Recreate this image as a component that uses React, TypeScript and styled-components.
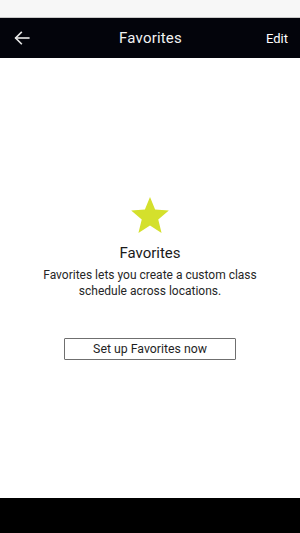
import { createGlobalStyle } from 'styled-components';
import styled from 'styled-components';

const GlobalStyle = createGlobalStyle`
  html, body {
    margin: 0;
    padding: 0;
    background: #ffffff;
  }
  body {
    font-family: Roboto, 'Liberation Sans', Arial, sans-serif;
  }
`;

const Screen = styled.div`
  display: flex;
  flex-direction: column;
  width: 300px;
  height: 533px;
  overflow: hidden;
`;

const StatusBar = styled.div`
  height: 17px;
  background: #f7f7f7;
  border-bottom: 1px solid #c9c9c9;
`;

const Header = styled.header`
  display: flex;
  align-items: center;
  justify-content: space-between;
  height: 40px;
  padding: 0 12px 0 13px;
  background: #03040b;
  color: #ffffff;
`;

const BackButton = styled.button`
  display: flex;
  align-items: center;
  width: 40px;
  padding: 0;
  background: none;
  border: none;
  color: #e6e6e6;
`;

const Title = styled.h1`
  margin: 0;
  font-size: 15px;
  font-weight: 400;
  letter-spacing: 0.2px;
  color: #f2f2f2;
`;

const EditButton = styled.button`
  width: 40px;
  padding: 0;
  background: none;
  border: none;
  color: #ffffff;
  font-family: inherit;
  font-size: 13px;
  font-weight: 400;
  text-align: right;
`;

const Body = styled.main`
  flex: 1;
  display: flex;
  flex-direction: column;
  align-items: center;
  padding-top: 138px;
`;

const StarIcon = styled.svg`
  width: 40px;
  height: 38px;
`;

const EmptyTitle = styled.h2`
  margin: 10px 0 0;
  font-size: 15px;
  font-weight: 400;
  color: #1a1a1a;
`;

const Description = styled.p`
  margin: 5px 0 0;
  font-size: 12px;
  line-height: 16px;
  color: #262626;
  text-align: center;
`;

const SetupButton = styled.button`
  width: 172px;
  height: 22px;
  margin-top: 39px;
  padding: 0;
  background: #ffffff;
  border: 1px solid #6f6f6f;
  border-radius: 1px;
  font-family: inherit;
  font-size: 12.3px;
  color: #1f1f1f;
`;

const BottomBar = styled.div`
  height: 35px;
  background: #000000;
`;

export default function App(): JSX.Element {
  return (
    <>
      <GlobalStyle />
      <Screen>
        <StatusBar />
        <Header>
          <BackButton aria-label="Back">
            <svg width="18" height="18" viewBox="0 0 24 24" fill="none" stroke="currentColor" strokeWidth="2.2" strokeLinecap="square">
              <path d="M21 12H4" />
              <path d="M11 4.5L3.5 12L11 19.5" />
            </svg>
          </BackButton>
          <Title>Favorites</Title>
          <EditButton>Edit</EditButton>
        </Header>
        <Body>
          <StarIcon viewBox="0 0 24 23">
            <path
              d="M12 0.6L15.1 8.2L23.4 8.8L17 14.2L19 22.4L12 17.9L5 22.4L7 14.2L0.6 8.8L8.9 8.2Z"
              fill="#d4e02c"
            />
          </StarIcon>
          <EmptyTitle>Favorites</EmptyTitle>
          <Description>
            Favorites lets you create a custom class
            <br />
            schedule across locations.
          </Description>
          <SetupButton>Set up Favorites now</SetupButton>
        </Body>
        <BottomBar />
      </Screen>
    </>
  );
}
